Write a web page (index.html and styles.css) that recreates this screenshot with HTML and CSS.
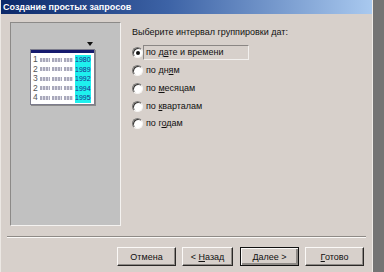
FILE: index.html
```html
<!DOCTYPE html>
<html lang="ru">
<head>
<meta charset="utf-8">
<title>Создание простых запросов</title>
<link rel="stylesheet" href="styles.css">
</head>
<body>
<div class="screen">
  <div class="window">
    <div class="titlebar">Создание простых запросов</div>
    <div class="main">
      <div class="preview">
        <div class="arrow"></div>
        <div class="table">
          <div class="thead"></div>
          <div class="rows">
            <div class="row"><span class="num">1</span><span class="ph"></span><span class="ph"></span><span class="ph short"></span><span class="year">1980</span></div>
            <div class="row"><span class="num">2</span><span class="ph"></span><span class="ph"></span><span class="ph short"></span><span class="year">1989</span></div>
            <div class="row"><span class="num">3</span><span class="ph"></span><span class="ph"></span><span class="ph short"></span><span class="year">1992</span></div>
            <div class="row"><span class="num">2</span><span class="ph"></span><span class="ph"></span><span class="ph short"></span><span class="year">1994</span></div>
            <div class="row"><span class="num">4</span><span class="ph"></span><span class="ph"></span><span class="ph short"></span><span class="year">1995</span></div>
          </div>
        </div>
      </div>
      <div class="options">
        <div class="prompt">Выберите интервал группировки дат:</div>
        <div class="radios">
          <div class="radio checked"><span class="dot"></span><span class="label focus">по д<u>а</u>те и времени</span></div>
          <div class="radio"><span class="dot"></span><span class="label">по дн<u>я</u>м</span></div>
          <div class="radio"><span class="dot"></span><span class="label">по <u>м</u>есяцам</span></div>
          <div class="radio"><span class="dot"></span><span class="label">по <u>к</u>варталам</span></div>
          <div class="radio"><span class="dot"></span><span class="label">по г<u>о</u>дам</span></div>
        </div>
      </div>
    </div>
    <div class="separator"></div>
    <div class="buttons">
      <div class="btn w-cancel"><span>Отмена</span></div>
      <div class="btn w-back"><span>&lt; <u>Н</u>азад</span></div>
      <div class="btn default w-next"><span><u>Д</u>алее &gt;</span></div>
      <div class="btn w-done"><span><u>Г</u>отово</span></div>
    </div>
  </div>
  <div class="desk"></div>
</div>
</body>
</html>
```
FILE: styles.css
```css
* { box-sizing: border-box; }
html, body { margin: 0; padding: 0; }
body {
  width: 384px;
  height: 272px;
  overflow: hidden;
  font-family: "Liberation Sans", Arial, sans-serif;
  font-size: 9px;
  color: #111;
}
.screen { display: flex; width: 384px; height: 272px; }
.window {
  width: 373px;
  height: 272px;
  background: #d7d0cb;
  border-left: 1px solid #ece8e4;
  border-right: 1px solid #efebe7;
  display: flex;
  flex-direction: column;
}
.desk { flex: 1; background: #747474; }
.titlebar {
  height: 14px;
  background: linear-gradient(to right, #0b2869 0%, #3d63a6 45%, #a9c9ef 100%);
  color: #fff;
  font-weight: bold;
  font-size: 9px;
  line-height: 14px;
  padding-left: 2px;
}
.main {
  display: flex;
  padding: 8px 0 0 9px;
  height: 212px;
}
.preview {
  position: relative;
  width: 111px;
  height: 204px;
  background: #c1c1c1;
  border-top: 1px solid #8c8a88;
  border-left: 1px solid #8c8a88;
  border-right: 1px solid #f4f2f0;
  border-bottom: 1px solid #f4f2f0;
  padding: 26px 0 0 19px;
}
.arrow {
  position: absolute;
  left: 76px;
  top: 19px;
  width: 0;
  height: 0;
  border-left: 3px solid transparent;
  border-right: 3px solid transparent;
  border-top: 4px solid #111;
}
.table {
  width: 65px;
  height: 56px;
  background: #fff;
  border: 1px solid #7c7c8c;
  box-shadow: 1px 1px 0 #8a8a8a;
  display: flex;
  flex-direction: column;
}
.thead { height: 3px; background: #151a6e; }
.rows { padding-top: 2px; }
.row {
  display: flex;
  align-items: center;
  height: 9.5px;
  font-size: 8.5px;
  line-height: 9px;
}
.num { width: 9px; padding-left: 2px; color: #555; }
.ph {
  width: 10px;
  height: 4px;
  margin-right: 2px;
  background: repeating-linear-gradient(to right, #a9a9bb 0 2px, #dedee8 2px 3px);
}
.ph.short { width: 9px; margin-right: 2px; }
.year {
  width: 16px;
  height: 9.5px;
  background: #1ef0ee;
  color: #1a2a8a;
  font-size: 7px;
  line-height: 9.5px;
  text-align: right;
  padding-right: 1px;
}
.options {
  margin-left: 11px;
  padding-top: 5px;
  display: flex;
  flex-direction: column;
}
.prompt { line-height: 11px; height: 11px; }
.radios { margin-top: 6px; display: flex; flex-direction: column; }
.radio {
  display: flex;
  align-items: center;
  height: 17.75px;
}
.dot {
  width: 11px;
  height: 11px;
  border-radius: 50%;
  background: #fff;
  border: 1px solid;
  border-color: #7a7876 #f6f4f2 #f6f4f2 #7a7876;
  box-shadow: inset 1px 1px 0 #3a3836;
  position: relative;
  flex: none;
}
.radio.checked .dot::after {
  content: "";
  position: absolute;
  left: 3px;
  top: 3px;
  width: 4px;
  height: 4px;
  border-radius: 50%;
  background: #111;
}
.label {
  margin-left: 0;
  line-height: 13px;
  padding: 0 2px;
  border: 1px solid transparent;
}
.label.focus {
  width: 106px;
  height: 15px;
  border-color: #8a8684 #f2f0ee #f2f0ee #8a8684;
}
u { text-decoration: underline; text-underline-offset: 1px; }
.separator {
  margin: 10px 6px 0 6px;
  height: 2px;
  border-top: 1px solid #8e8a86;
  border-bottom: 1px solid #fbf9f7;
}
.buttons {
  display: flex;
  margin-top: 9px;
  padding-left: 116px;
}
.btn {
  height: 19px;
  display: flex;
  align-items: center;
  justify-content: center;
  background: #d7d0cb;
  border: 1px solid;
  border-color: #fbf9f7 #2a2826 #2a2826 #fbf9f7;
  box-shadow: inset -1px -1px 0 #8e8a86;
  white-space: pre;
}
.btn.default {
  border: 1px solid #111;
  box-shadow: inset 1px 1px 0 #fbf9f7, inset -2px -2px 0 #8e8a86;
}
.w-cancel { width: 59px; }
.w-back { width: 51px; margin-left: 6px; }
.w-next { width: 59px; margin-left: 7px; }
.w-done { width: 59px; margin-left: 6px; }
```
